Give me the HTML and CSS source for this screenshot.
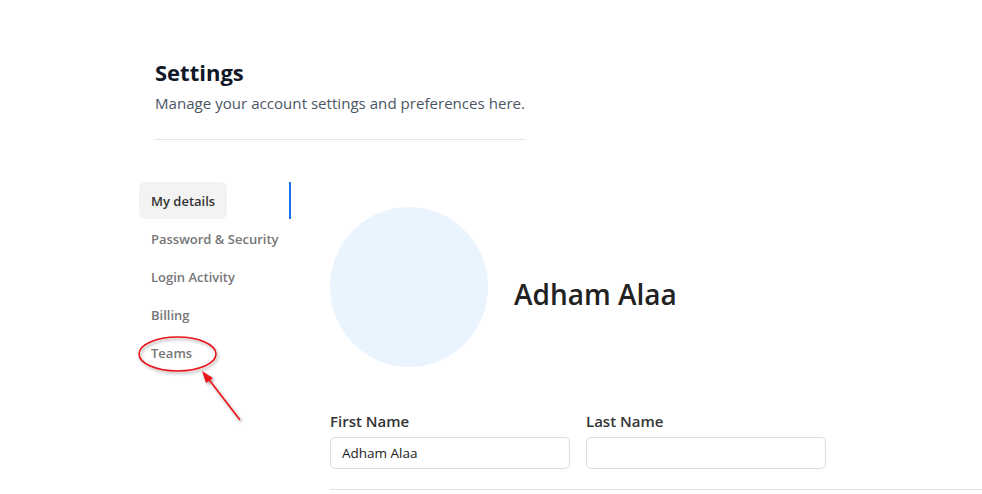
FILE: index.html
```html
<!DOCTYPE html>
<html>
<head>
<meta charset="utf-8">
<link rel="stylesheet" href="styles.css">
</head>
<body>
<div class="page">
  <header class="head">
    <h1 class="title">Settings</h1>
    <p class="subtitle">Manage your account settings and preferences here.</p>
    <div class="head-rule"></div>
  </header>
  <div class="body">
    <nav class="side">
      <div class="nav-row active"><span class="nav-link">My details</span></div>
      <div class="nav-row"><span class="nav-link">Password &amp; Security</span></div>
      <div class="nav-row"><span class="nav-link">Login Activity</span></div>
      <div class="nav-row"><span class="nav-link">Billing</span></div>
      <div class="nav-row"><span class="nav-link">Teams</span></div>
    </nav>
    <main class="main">
      <div class="profile">
        <div class="avatar"></div>
        <div class="name">Adham Alaa</div>
      </div>
      <div class="fields">
        <label class="field">
          <span class="field-label">First Name</span>
          <input class="field-input" type="text" value="Adham Alaa">
        </label>
        <label class="field">
          <span class="field-label">Last Name</span>
          <input class="field-input" type="text" value="">
        </label>
      </div>
      <div class="main-rule"></div>
    </main>
  </div>
  <svg class="annot" width="982" height="494" viewBox="0 0 982 494">
    <defs>
      <filter id="sh" x="-20%" y="-20%" width="140%" height="160%">
        <feDropShadow dx="1.5" dy="2" stdDeviation="1.5" flood-color="#000" flood-opacity="0.35"/>
      </filter>
    </defs>
    <g filter="url(#sh)">
      <ellipse cx="177.5" cy="354" rx="38.5" ry="17" fill="none" stroke="#e8141a" stroke-width="1.6"/>
      <line x1="240" y1="420" x2="207" y2="377" stroke="#e8141a" stroke-width="1.6"/>
      <polygon points="202,371 213,378 206,383" fill="#e8141a"/>
    </g>
  </svg>
</div>
</body>
</html>
```

FILE: styles.css
```css
* { box-sizing: border-box; }
html, body { margin: 0; padding: 0; background: #fff; }
body {
  font-family: "Open Sans", "Noto Sans", sans-serif;
  color: #222;
  width: 982px;
  height: 494px;
  overflow: hidden;
}
.page { position: relative; width: 982px; height: 494px; }
.head { padding: 57px 0 0 155px; width: 525px; }
.title {
  margin: 0;
  font-size: 22px;
  font-weight: 700;
  line-height: 30px;
  color: #111827;
}
.subtitle {
  margin: 5px 0 0;
  font-size: 15.1px;
  line-height: 22px;
  color: #4b5563;
  white-space: nowrap;
}
.head-rule { margin-top: 25px; height: 1px; background: #e5e5e5; width: 370px; }

.body { display: flex; padding-left: 139px; margin-top: 42px; }
.side { width: 152px; display: flex; flex-direction: column; gap: 1px; }
.nav-row { height: 37px; display: flex; align-items: center; border-right: 2px solid transparent; }
.nav-row.active { border-right-color: #1a73e8; }
.nav-link {
  display: flex; align-items: center;
  height: 37px;
  padding: 0 12px;
  border-radius: 6px;
  font-size: 13px;
  font-weight: 600;
  color: #767676;
  white-space: nowrap;
}
.nav-row.active .nav-link { background: #f3f3f3; color: #333; }

.main { margin-left: 39px; padding-top: 25px; width: 652px; }
.profile { display: flex; align-items: center; gap: 26px; }
.avatar { width: 158px; height: 160px; border-radius: 50%; background: #eaf4fe; }
.name { font-size: 28px; font-weight: 600; color: #222; margin-top: 14px; }
.fields { display: flex; gap: 16px; margin-top: 44px; }
.field { display: flex; flex-direction: column; gap: 6px; width: 240px; }
.field-label { font-size: 15px; font-weight: 600; color: #333; line-height: 20px; }
.field-input {
  height: 32px;
  width: 240px;
  border: 1px solid #dcdcdc;
  border-radius: 5px;
  padding: 0 11px;
  font-family: inherit;
  font-size: 13.5px;
  color: #222;
  background: #fff;
  outline: none;
}
.main-rule { margin-top: 20px; height: 1px; background: #e0e0e0; width: 652px; }

.annot { position: absolute; left: 0; top: 0; pointer-events: none; }
```
